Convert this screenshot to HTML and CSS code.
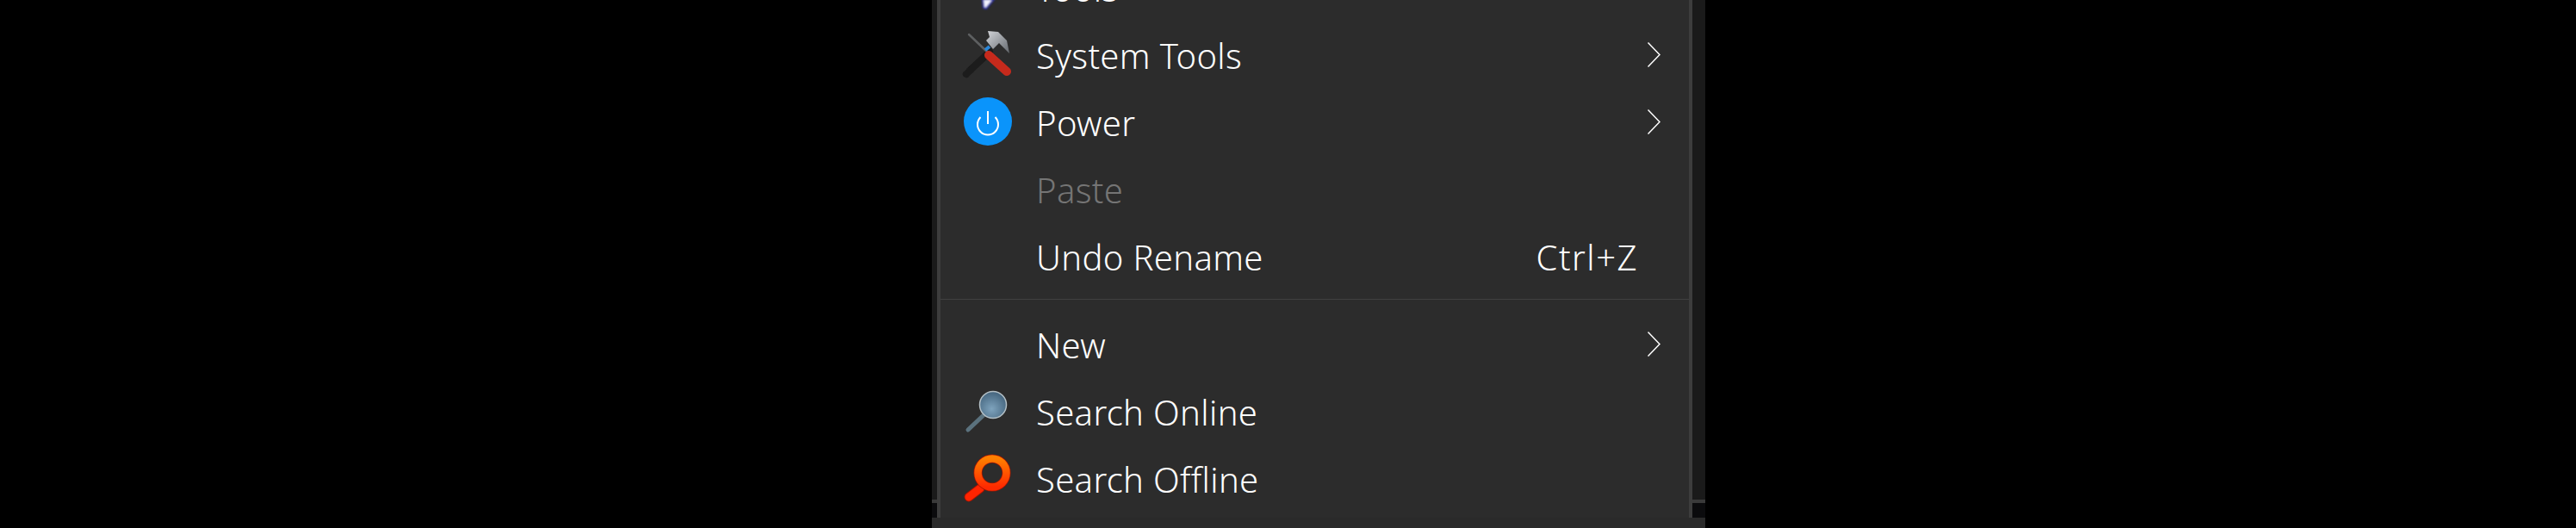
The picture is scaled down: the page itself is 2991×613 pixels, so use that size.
FILE: index.html
```html
<!DOCTYPE html>
<html lang="en">
<head>
    <meta charset="UTF-8">
    <meta name="viewport" content="width=device-width, initial-scale=1.0">
    <title>Context Menu</title>
    <link rel="stylesheet" href="styles.css">
</head>
<body>
    <div class="window">
        <div class="window-body">
            <div class="side side-left">
                <div class="side-fill"></div>
                <div class="side-line"></div>
                <div class="side-gap"></div>
            </div>

            <!-- Context Menu -->
            <div class="menu">
                <div class="item">
                    <span class="icon">
                        <svg width="64" height="64" viewBox="0 0 64 64">
                            <defs>
                                <filter id="soft"><feGaussianBlur stdDeviation="0.8"/></filter>
                            </defs>
                            <polygon points="25,46 38,46 29,57 26,56" fill="#f4f4ff" stroke="#2a2fa8" stroke-width="2" filter="url(#soft)"/>
                        </svg>
                    </span>
                    <span class="label">Tools</span>
                </div>
                <div class="item">
                    <span class="icon">
                        <svg width="64" height="64" viewBox="0 0 64 64">
                            <defs>
                                <linearGradient id="head" x1="0" y1="0" x2="1" y2="1">
                                    <stop offset="0" stop-color="#d4d6da"/>
                                    <stop offset="1" stop-color="#62676d"/>
                                </linearGradient>
                                <filter id="soft2"><feGaussianBlur stdDeviation="0.6"/></filter>
                            </defs>
                            <g filter="url(#soft2)">
                                <path d="M6 55 L33 29" stroke="#1b1b1b" stroke-width="8" stroke-linecap="round"/>
                                <path d="M9 9 L30 29" stroke="#5d5f61" stroke-width="2.5" stroke-linecap="round"/>
                                <path d="M31 5 L43 6 L53 16 L56 31 L50 25 L44 19 L37 26 L29 16 L33 12 Z" fill="url(#head)"/>
                                <path d="M28 27 L33 23" stroke="#2c86d8" stroke-width="4"/>
                                <path d="M32 33 L53 52" stroke="#c62a1e" stroke-width="10" stroke-linecap="round"/>
                            </g>
                        </svg>
                    </span>
                    <span class="label">System Tools</span>
                    <svg class="arrow" width="15" height="29" viewBox="0 0 15 29"><path d="M0.5 0.5 L14 14.5 L0.5 28.5" fill="none" stroke="#fff" stroke-width="1.5"/></svg>
                </div>
                <div class="item">
                    <span class="icon">
                        <svg width="64" height="64" viewBox="0 0 64 64">
                            <circle cx="31" cy="32" r="28" fill="#0a94fb"/>
                            <path d="M22.5 27 A12 12 0 1 0 39.5 27" fill="none" stroke="#fff" stroke-width="2"/>
                            <path d="M31 20 V35" stroke="#fff" stroke-width="2"/>
                        </svg>
                    </span>
                    <span class="label">Power</span>
                    <svg class="arrow" width="15" height="29" viewBox="0 0 15 29"><path d="M0.5 0.5 L14 14.5 L0.5 28.5" fill="none" stroke="#fff" stroke-width="1.5"/></svg>
                </div>
                <div class="item disabled">
                    <span class="icon"></span>
                    <span class="label">Paste</span>
                </div>
                <div class="item">
                    <span class="icon"></span>
                    <span class="label">Undo Rename</span>
                    <span class="shortcut">Ctrl+Z</span>
                </div>

                <div class="separator"></div>

                <div class="item">
                    <span class="icon"></span>
                    <span class="label">New</span>
                    <svg class="arrow" width="15" height="29" viewBox="0 0 15 29"><path d="M0.5 0.5 L14 14.5 L0.5 28.5" fill="none" stroke="#fff" stroke-width="1.5"/></svg>
                </div>
                <div class="item">
                    <span class="icon">
                        <svg width="64" height="64" viewBox="0 0 64 64">
                            <defs>
                                <radialGradient id="lens" cx="0.45" cy="0.65" r="0.7">
                                    <stop offset="0" stop-color="#7ea3bd"/>
                                    <stop offset="1" stop-color="#3f5f78"/>
                                </radialGradient>
                            </defs>
                            <path d="M26 37 L8 54" stroke="#5b727e" stroke-width="5" stroke-linecap="round"/>
                            <circle cx="37" cy="25" r="15.5" fill="url(#lens)" stroke="#b4c0c6" stroke-width="1.5"/>
                        </svg>
                    </span>
                    <span class="label">Search Online</span>
                </div>
                <div class="item">
                    <span class="icon">
                        <svg width="64" height="64" viewBox="0 0 64 64">
                            <defs>
                                <linearGradient id="ring" x1="0" y1="0" x2="0" y2="1">
                                    <stop offset="0" stop-color="#ff7f00"/>
                                    <stop offset="1" stop-color="#ff2a00"/>
                                </linearGradient>
                            </defs>
                            <path d="M22 44 L9 54" stroke="#a81400" stroke-width="11" stroke-linecap="round"/>
                            <path d="M22 44 L9 54" stroke="#ff2400" stroke-width="9" stroke-linecap="round"/>
                            <circle cx="36" cy="26" r="16.5" fill="none" stroke="#a81400" stroke-width="10"/>
                            <circle cx="36" cy="26" r="16.5" fill="none" stroke="url(#ring)" stroke-width="8.5"/>
                        </svg>
                    </span>
                    <span class="label">Search Offline</span>
                </div>
            </div>

            <div class="side side-right">
                <div class="side-fill"></div>
                <div class="side-line"></div>
                <div class="side-gap"></div>
            </div>
        </div>
        <div class="window-footer"></div>
    </div>
</body>
</html>
```

FILE: styles.css
```css
/* General Styles */
body {
    margin: 0;
    height: 613px;
    overflow: hidden;
    background: #000000;
    font-family: "Noto Sans", "Open Sans", sans-serif;
    color: #ffffff;
}
.window {
    display: flex;
    flex-direction: column;
    justify-content: flex-end;
    width: 898px;
    height: 613px;
    margin-left: 1082px;
    overflow: hidden;
}
.window-body {
    display: flex;
    flex-shrink: 0;
}
.window-footer {
    flex-shrink: 0;
    height: 12px;
    background: #2a2a2a;
}

/* Strips either side of the menu */
.side {
    display: flex;
    flex-direction: column;
}
.side-left {
    width: 6px;
}
.side-right {
    width: 15px;
}
.side-fill {
    flex: 1;
    background: #1a1a1a;
}
.side-line {
    height: 4px;
    background: #3a3a3a;
}
.side-gap {
    height: 17px;
    background: #0b0b0d;
}

/* Context Menu */
.menu {
    flex: 1;
    padding-bottom: 7px;
    background: #2c2c2c;
    border-left: 4px solid #3d3d3d;
    border-right: 4px solid #3d3d3d;
}
.item {
    display: flex;
    align-items: center;
    height: 78px;
    padding: 0 33px 0 24px;
    font-size: 40px;
    font-weight: 350;
}
.item.disabled {
    color: #757575;
}
.icon {
    display: block;
    flex-shrink: 0;
    width: 64px;
    height: 64px;
}
.icon svg {
    display: block;
}
.label {
    flex: 1;
    margin-left: 23px;
    padding-top: 2px;
    letter-spacing: 0.35px;
    white-space: nowrap;
}
.shortcut {
    margin-right: 26px;
    padding-top: 2px;
    letter-spacing: 1.5px;
}
.arrow {
    flex-shrink: 0;
}
.separator {
    height: 1px;
    margin: 11px 0 12px;
    background: #404040;
}
```
